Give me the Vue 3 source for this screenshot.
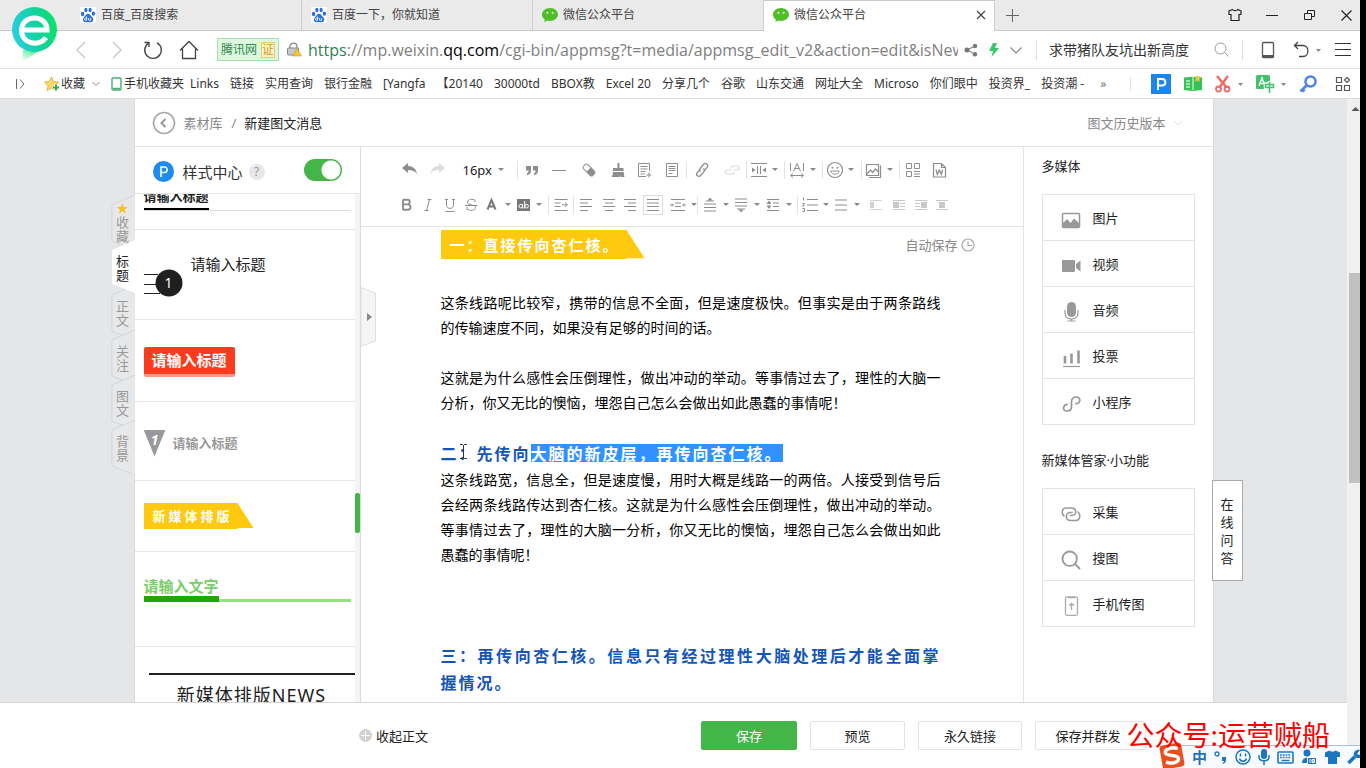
<script setup>
import { ref } from 'vue'

const paw = '<rect width="16" height="16" fill="#fff"/><g fill="#2b6fe0"><ellipse cx="2.6" cy="7" rx="1.7" ry="2.2"/><ellipse cx="5.9" cy="3" rx="1.6" ry="2.3"/><ellipse cx="10.1" cy="3" rx="1.6" ry="2.3"/><ellipse cx="13.4" cy="6.6" rx="1.7" ry="2.2"/><path d="M8 6.8c-2 0-2.500 2-4 3.400-1.600 1.500-1.600 5 1.600 5 1 0 1.600-.3 2.400-.3s1.600.3 2.600.3c3.200 0 3.200-3.600 1.600-5C10.600 8.800 10 6.800 8 6.800z"/></g><path d="M6.600 9.500v3.800H5.500c-1.300 0-1.300-2.300 0-2.300h1M8.500 11v1.600c0 .5.300.7.8.7h1.400V11" fill="none" stroke="#fff" stroke-width=".9"/>'
const wechat = '<path d="M8 1C3.600 1 0 3.900 0 7.500c0 2 1.100 3.700 2.800 4.900L2.300 15l2.900-1.500c.9.3 1.800.4 2.800.4 4.400 0 8-2.800 8-6.400S12.400 1 8 1z" fill="#4fbf26"/><circle cx="5.400" cy="5.800" r="1" fill="#fff"/><circle cx="10.600" cy="5.800" r="1" fill="#fff"/>'

const icons = {
  undo: '<path d="M1 7l6-5v3c5 0 8 3 9 8-2-3-5-4-9-4v3z" fill="#8d8d8d"/>',
  redo: '<path d="M17 7l-6-5v3C6 5 3 8 2 13c2-3 5-4 9-4v3z" fill="#dcdcdc"/>',
  quote: '<path d="M3 5h5v4.500c0 3-1.500 4-4 4.500v-2c1-.4 1.700-1 1.700-2.500H3zM10 5h5v4.500c0 3-1.500 4-4 4.500v-2c1-.4 1.700-1 1.700-2.500H10z" fill="#8d8d8d"/>',
  hr: '<path d="M2 9.500h14" stroke="#8d8d8d"/>',
  eraser: '<g transform="rotate(45 9 9)"><rect x="2.500" y="6" width="13" height="6" rx="2" fill="none" stroke="#8d8d8d"/><path d="M8.500 6h5a2 2 0 0 1 2 2v2a2 2 0 0 1-2 2h-5z" fill="#8d8d8d"/></g>',
  brush: '<path d="M8.500 2h2v5h4v3H4V7h4.500zM4 11h10.500l1 5H12v-2l-1 2H2.500c1-1.500 1.500-3 1.500-5z" fill="#8d8d8d"/>',
  template: '<path d="M14.500 10V2.500h-11v13H11M5.500 5.500h7M5.500 8h7M5.500 10.500h5M5.500 13h4M14 11.500v5M11.500 14h5" fill="none" stroke="#8d8d8d"/>',
  doc: '<path d="M3.500 2.500h11v13h-11zM5.500 5.500h7M5.500 7.500h7M5.500 9.500h7M5.500 12.500h4" fill="none" stroke="#8d8d8d"/>',
  link: '<path d="M7.500 10.500c-1.500-1-1-2.500 0-3.500l3-3.500c2-2.500 5.500.2 3.700 2.600L11 10M10.300 7.500c1.500 1 1.300 2.500.3 3.600l-3 3.400c-2 2.200-5.200-.4-3.600-2.600l2.500-3" fill="none" stroke="#8d8d8d" stroke-width="1.300"/>',
  unlink: '<path d="M8 9H4.500c-3 0-3 4 0 4H9c1.500 0 2.300-1 2.300-2M8 7.500C8 6 9 5 10 5h4c3 0 3 4 0 4h-3.500" fill="none" stroke="#dcdcdc" stroke-width="1.200"/>',
  spacing: '<path d="M1 2.500h16M1 15.500h16M7.500 5v8M10.500 5v8" fill="none" stroke="#8d8d8d"/><path d="M2 6.500L5.500 9 2 11.500zM16 6.500L12.500 9 16 11.500z" fill="#8d8d8d"/>',
  letter: '<path d="M2.500 2v8M15.500 2v8M5.500 10.500L9 2.500l3.500 8M6.800 7.500h4.400M3 14.500h12M5 12.500l-2.500 2L5 16.500M13 12.500l2.500 2-2.500 2" fill="none" stroke="#8d8d8d"/>',
  smile: '<circle cx="9" cy="9" r="7.500" fill="none" stroke="#8d8d8d" stroke-width="1.200"/><circle cx="6.500" cy="6.800" r="1" fill="#8d8d8d"/><circle cx="11.500" cy="6.800" r="1" fill="#8d8d8d"/><path d="M4.800 10h8.400c-.8 4.300-7.600 4.300-8.400 0z" fill="none" stroke="#8d8d8d"/>',
  picture: '<path d="M1.500 3.500h12v11h-12zM15.500 4.500v12H4M2 13l3.500-4 2 2.500 3-3.500 3 3" fill="none" stroke="#8d8d8d" stroke-width="1.200"/>',
  blocks: '<path d="M2.500 2.500h5v5h-5zM10.500 2.500h5v5h-5zM2.500 10.500h5v5h-5zM10 10.500h6M10 13h6M10 15.500h6" fill="none" stroke="#8d8d8d"/>',
  word: '<path d="M3.500 2.500h8l4 4v9.500h-12zM11.500 2.500v4h4M6 8.500l1.300 5 2-4.500 2 4.500 1.300-5" fill="none" stroke="#8d8d8d" stroke-width="1.200"/>',
  bold: '<path d="M5 3.500V14M5 3.800h4.300c3.200 0 3.200 4.600 0 4.600H5h4.800c3.600 0 3.600 5.400 0 5.400H5" fill="none" stroke="#8d8d8d" stroke-width="1.900"/>',
  italic: '<path d="M8.500 3.500h4M5.500 14.500h4M10.500 3.500l-3 11" fill="none" stroke="#8d8d8d"/>',
  underline: '<path d="M4 3.500h3M11 3.500h3M5.500 3.500V9c0 4.500 7 4.500 7 0V3.500M4.500 15.500h9" fill="none" stroke="#8d8d8d"/>',
  strike: '<path d="M13 6V4.200C11 3 5.500 3 5.500 6c0 4 8 2 8 5.500 0 3.500-6 3.500-8.500 1.700V11M3 9.500h12.500" fill="none" stroke="#8d8d8d"/>',
  color: '<path d="M4.500 13.500L8.500 4l4 9.500M6 10.500h5" fill="none" stroke="#777" stroke-width="2"/>',
  back: '<rect x="3" y="3" width="13" height="12" fill="#777"/><g fill="none" stroke="#fff"><circle cx="6.800" cy="10.200" r="1.800"/><path d="M8.700 8v4.500M10.700 5v7.500"/><circle cx="12.600" cy="10.200" r="1.800"/></g>',
  indent: '<path d="M2.500 3.500h13M2.500 7h6M2.500 10.500h6M2.500 14.500h13M10 8.800h5M13 6.500l2.500 2.300L13 11" fill="none" stroke="#8d8d8d"/>',
  left: '<path d="M3 3.500h12M3 7h8M3 10.500h12M3 14.500h8" stroke="#8d8d8d"/>',
  center: '<path d="M3 3.500h12M5 7h8M3 10.500h12M5 14.500h8" stroke="#8d8d8d"/>',
  right: '<path d="M3 3.500h12M7 7h8M3 10.500h12M7 14.500h8" stroke="#8d8d8d"/>',
  justify: '<path d="M3 3.500h12M3 7h12M3 10.500h12M3 14.500h12" stroke="#8d8d8d"/>',
  inset: '<path d="M2 3.500h14M6 7h6M6 10.500h6M2 14.500h14M1 9h3M14 9h3M3 7.500L4.500 9 3 10.500M15 7.500L13.500 9l1.500 1.500" fill="none" stroke="#8d8d8d"/>',
  before: '<path d="M3 8h12M3 11.500h12M3 15h12M5 5h8" stroke="#8d8d8d"/><path d="M9 1.500l2.500 3h-5z" fill="#8d8d8d"/>',
  after: '<path d="M3 3h12M3 6.500h12M3 10h12M5 13h8" stroke="#8d8d8d"/><path d="M9 16.500l2.500-3h-5z" fill="#8d8d8d"/>',
  lines: '<path d="M3 3.500h12M9 7h6M9 10.500h6M3 14.500h12" stroke="#8d8d8d"/><path d="M5 4.500l2.500 3.500h-5zM5 13l2.500-3.500h-5z" fill="#8d8d8d"/>',
  ordered: '<path d="M6 3.500h11M6 9h11M6 14.500h11M2.500 1.500v3M1.500 7.500h2l-2 2.500h2M1.500 12.500h2v3h-2" fill="none" stroke="#8d8d8d"/>',
  bullets: '<path d="M3 4h12M3 9h12M3 14h12" stroke="#8d8d8d"/>',
  fleft: '<path d="M3 4.500h12M3 13.500h12" stroke="#d2d2d2"/><path d="M3 6h4v6H3z" fill="#d2d2d2"/>',
  fwrap: '<path d="M3 4.500h12M10 7.500h5M10 10.500h5M3 13.500h12" stroke="#c8c8c8"/><path d="M3 6h6v6H3z" fill="#c8c8c8"/>',
  fright: '<path d="M3 4.500h12M3 7.500h5M3 10.500h5M3 13.500h12" stroke="#c8c8c8"/><path d="M9 6h6v6H9z" fill="#c8c8c8"/>',
  fmid: '<path d="M3 4.500h12M3 13.500h12" stroke="#c8c8c8"/><path d="M6 6h6v6H6z" fill="#c8c8c8"/>',
}

const row1 = [
  ['undo', 28, '撤销'], ['redo', 27, '重做'], ['size', 66], ['|'],
  ['quote', 28, '引用'], ['hr', 27, '分隔线'], ['eraser', 33, '清除格式'], ['brush', 24, '格式刷'], ['template', 28, '插入模板'], ['doc', 28, '文档'], ['|'],
  ['link', 31, '超链接'], ['unlink', 28, '取消链接'], ['|'],
  ['spacing', 37, '两端缩进', 1], ['|'], ['letter', 37, '字间距', 1], ['|'], ['smile', 38, '表情', 1], ['|'], ['picture', 37, '图片', 1], ['|'],
  ['blocks', 27, '版块'], ['word', 24, '导入Word'],
]
const row2 = [
  ['bold', 22, '加粗'], ['italic', 21, '斜体'], ['underline', 23, '下划线'], ['strike', 18, '删除线'], ['color', 31, '字体颜色', 1], ['back', 37, '背景色', 1], ['|'],
  ['indent', 24, '首行缩进'], ['|'],
  ['left', 24, '左对齐'], ['center', 22, '居中'], ['right', 20, '右对齐'], ['justify', 20, '两端对齐'], ['inset', 31, '缩进', 1], ['|'],
  ['before', 31, '段前距', 1], ['after', 32, '段后距', 1], ['lines', 36, '行间距', 1], ['|'],
  ['ordered', 31, '有序列表', 1], ['bullets', 36, '无序列表', 1],
  ['fleft', 23, '左浮动'], ['fwrap', 22, '左环绕'], ['fright', 22, '右环绕'], ['fmid', 20, '居中环绕'],
]
const rows = [row1, row2]

const tabs = [
  { t: '百度_百度搜索', i: paw }, { t: '百度一下，你就知道', i: paw },
  { t: '微信公众平台', i: wechat }, { t: '微信公众平台', i: wechat, on: true },
]
const marks = ['Links', '链接', '实用查询', '银行金融', '[Yangfa', '【20140', '30000td', 'BBOX教', 'Excel 20', '分享几个', '谷歌', '山东交通', '网址大全', 'Microso', '你们眼中', '投资界_', '投资潮 -']
const sideTabs = ['收藏', '标题', '正文', '关注', '图文', '背景']

const media = [
  { t: '图片', i: '<rect x="1.500" y="3.500" width="17" height="14" rx="1" fill="none" stroke="#999" stroke-width="1.500"/><path d="M2 17v-4l4-4 3.500 4L13 8.500l5 4.500v4z" fill="#999"/>' },
  { t: '视频', i: '<rect x="1" y="4" width="13" height="12" rx="1" fill="#999"/><path d="M19.500 4.500v11L15 12V8z" fill="#999"/>' },
  { t: '音频', i: '<rect x="6" y="0" width="9" height="15" rx="4.500" fill="#999"/><path d="M4 8v3c0 8 13 8 13 0V8M10.500 17v2M6.500 19h8" fill="none" stroke="#999" stroke-width="1.200"/>' },
  { t: '投票', i: '<path d="M4 8v7.500M10.500 5.500v10M17.500 2.500v13" stroke="#999" stroke-width="2.600"/><path d="M2 18.500h17" stroke="#999" stroke-width="1.200"/>' },
  { t: '小程序', i: '<path d="M6 10.300c-4 .7-5 6.700-.5 6.700 3 0 5-1.500 5-4V8c0-3 2-5 5-5 4.500 0 4.500 6.200-.5 6.700" fill="none" stroke="#999" stroke-width="1.700" stroke-linecap="round"/>' },
]
const tools = [
  { t: '采集', i: '<path d="M3 12C0 9.500 1 4 5 4h5.500c5.500 0 5.500 7.500.5 7.500H9.500M17 8c3 2.500 2 8.500-2 8.500H9.500c-5.500 0-5.500-8 0-8h1.500" fill="none" stroke="#999" stroke-width="1.600" stroke-linecap="round"/>' },
  { t: '搜图', i: '<circle cx="8.700" cy="8.700" r="7.200" fill="none" stroke="#999" stroke-width="1.800"/><path d="M14 14l5 5" stroke="#999" stroke-width="1.800"/>' },
  { t: '手机传图', i: '<rect x="4.500" y=".8" width="12" height="18.500" rx="1.500" fill="none" stroke="#aaa" stroke-width="1.300"/><path d="M7 1.500h7M10.500 14V7.500M8 9.800l2.500-2.500L13 9.800" fill="none" stroke="#aaa" stroke-width="1.300"/>' },
]
const groups = [{ h: '多媒体', items: media }, { h: '新媒体管家·小功能', items: tools }]

const enabled = ref(true)
const query = ref('求带猪队友坑出新高度')
const size = ref('16px')
</script>

<template>
  <div class="screen">
    <header class="tabbar">
      <svg class="logo" viewBox="0 0 50 58" width="50" height="58" aria-label="browser">
        <defs>
          <linearGradient id="lg" x1="0" y1=".6" x2="1" y2=".4"><stop offset="0" stop-color="#27cfe0" /><stop offset=".6" stop-color="#12d39a" /><stop offset="1" stop-color="#0be36b" /></linearGradient>
          <linearGradient id="tail" x1=".8" y1="0" x2=".1" y2="1"><stop offset="0" stop-color="#0be36b" /><stop offset=".3" stop-color="#0be36b" /><stop offset="1" stop-color="#0be36b" stop-opacity="0" /></linearGradient>
        </defs>
        <path d="M44 36L12 57c0-5 1-9 1-12z" fill="url(#tail)" />
        <circle cx="24.500" cy="24.500" r="22.500" fill="url(#lg)" />
        <path d="M12 25H37c0-16-25-16-25.500 0 0 14.500 18 17 24.500 7.500" fill="none" stroke="#fff" stroke-width="5" />
      </svg>
      <div v-for="(t, k) in tabs" :key="k" class="tab" :class="{ on: t.on }">
        <svg viewBox="0 0 16 16" width="16" height="16" v-html="t.i"></svg>
        <span>{{ t.t }}</span>
        <button v-if="t.on" class="close" aria-label="关闭标签"><svg width="10" height="10"><path d="M1 1l8 8M9 1L1 9" stroke="#444" stroke-width="1.200" /></svg></button>
      </div>
      <button class="newtab" aria-label="新标签"><svg width="14" height="14"><path d="M7.500 1v13M1 7.500h13" stroke="#666" /></svg></button>
      <div class="win">
        <button aria-label="皮肤"><svg width="14" height="14"><path d="M4.500 1.500L1 3v3.500h2v6h8v-6h2V3L9.500 1.500C8.500 3 5.500 3 4.500 1.500z" fill="none" stroke="#222" stroke-width="1.200" /></svg></button>
        <button aria-label="最小化"><svg width="14" height="14"><path d="M1 7.500h12" stroke="#222" /></svg></button>
        <button aria-label="还原"><svg width="14" height="14"><path d="M2.500 5.500h7v6h-7zM5.500 5V2.500h7v6H10" fill="none" stroke="#222" /></svg></button>
        <button aria-label="关闭"><svg width="14" height="14"><path d="M2.500 2.500l10 10M12.500 2.500l-10 10" stroke="#222" stroke-width="1.200" /></svg></button>
      </div>
    </header>

    <div class="urlbar">
      <nav class="nav">
        <button aria-label="后退"><svg width="20" height="20"><path d="M14 2L6 10l8 8" fill="none" stroke="#c4c4c4" stroke-width="1.200" /></svg></button>
        <button aria-label="前进"><svg width="20" height="20"><path d="M6 2l8 8-8 8" fill="none" stroke="#c4c4c4" stroke-width="1.200" /></svg></button>
        <button aria-label="刷新"><svg width="20" height="20"><path d="M5 3.500A8.300 8.300 0 1 0 14 2.800M1.500 2.500H6V7" fill="none" stroke="#444" stroke-width="1.400" /></svg></button>
        <button aria-label="主页"><svg width="20" height="20"><path d="M1 10.500L10 1.500l9 9M3.500 8.500v10h13v-10" fill="none" stroke="#444" stroke-width="1.300" /></svg></button>
      </nav>
      <span class="cert">腾讯网<b>证</b></span>
      <svg class="lock" width="15" height="15"><path d="M3 6V4.500c0-4.500 7-4.500 7 0V6" fill="none" stroke="#888" stroke-width="1.300" /><rect x=".5" y="6" width="11" height="7" rx="1" fill="#c9c9c9" stroke="#888" /><path d="M10 6.500l4.500 7.500h-9z" fill="#f4c531" stroke="#c79a22" stroke-width=".6" /></svg>
      <div class="url"><span class="sec">https</span>://mp.weixin.<span class="host">qq.com</span>/cgi-bin/appmsg?t=media/appmsg_edit_v2&amp;action=edit&amp;isNew=1</div>
      <div class="urlacts">
        <svg width="14" height="14"><path d="M11 3L3 7l8 4" fill="none" stroke="#888" stroke-width="1.200" /><circle cx="3" cy="7" r="2.500" fill="#777" /><circle cx="11" cy="3" r="2.200" fill="#777" /><circle cx="11" cy="11.200" r="2.200" fill="#777" /></svg>
        <svg width="10" height="14"><path d="M4 0h4L6 5h4L2.500 14 4 8H0z" fill="#3cc46e" /></svg>
        <svg width="12" height="14"><path d="M.5 4.500L6 10l5.500-5.500" fill="none" stroke="#888" stroke-width="1.200" /></svg>
      </div>
      <label class="search"><input v-model="query" aria-label="搜索" /><svg width="15" height="15"><circle cx="6.500" cy="6.500" r="5.500" fill="none" stroke="#999" /><path d="M10.500 10.500l4 4" stroke="#999" /></svg></label>
      <div class="uright">
        <button aria-label="手机"><svg width="14" height="18"><rect x="1.500" y="1.500" width="11" height="15" rx="1" fill="none" stroke="#555" stroke-width="1.300" /><path d="M2 15h10" stroke="#555" stroke-width="2" /></svg></button>
        <button aria-label="恢复"><svg width="28" height="18"><path d="M5 1L1.500 4.500 5 8M1.500 4.500H10c6.500 0 6.500 11 0 11H6" fill="none" stroke="#444" stroke-width="1.300" /><path d="M23 8h5l-2.500 3z" fill="#888" /></svg></button>
        <button aria-label="菜单"><svg width="16" height="18"><path d="M0 2.500h16M0 8.500h16M0 14.500h16" stroke="#333" /></svg></button>
      </div>
    </div>

    <div class="marks">
      <svg class="side" width="10" height="12"><path d="M1.500 1v10M5 1.500L9 6l-4 4.500" fill="none" stroke="#666" /></svg>
      <a href="#" class="fav"><svg width="16" height="16"><path d="M7.500 1l2 4.600 5 .5-3.700 3.400 1 5-4.300-2.600-4.400 2.600 1.100-5L.5 6.100l5-.5z" fill="#ffd76b" stroke="#e0a52b" stroke-width=".8" /><path d="M12 8.500v6M9 11.500h6" stroke="#fff" stroke-width="3.500" /><path d="M12 8.500v6M9 11.500h6" stroke="#2fae50" stroke-width="2" /></svg>收藏<svg class="chev" width="8" height="8"><path d="M.5 2L4 5.500 7.500 2" fill="none" stroke="#888" /></svg></a>
      <a href="#" class="phone"><svg width="11" height="14"><rect x="1" y="1" width="9" height="12" rx="1" fill="#fff" stroke="#44b077" stroke-width="1.400" /><path d="M2 11.500h7" stroke="#44b077" stroke-width="1.500" /></svg>手机收藏夹</a>
      <a v-for="m in marks" :key="m" href="#">{{ m }}</a>
      <span class="more">»</span>
      <div class="exts">
        <svg width="20" height="20"><rect width="20" height="20" fill="#1b87ec" /><path d="M7 16V5h4c4.500 0 4.500 6.500 0 6.500H7" fill="none" stroke="#fff" stroke-width="2" /></svg>
        <svg width="20" height="18"><path d="M1 2.500l8.500-.8 9.500.8V15l-9.500 1L1 15z" fill="#35c257" /><path d="M10 2v13M3 6h4M3 9h4M3 12h4" stroke="#c5f3cf" stroke-width="1.300" /><path d="M12.500 1h4v6l-2-1.500-2 1.500z" fill="#f0c642" /></svg>
        <svg width="29" height="18"><path d="M2 1l10 12M13 1L4 13" stroke="#ee6c66" stroke-width="2.500" /><circle cx="3.500" cy="14" r="2.500" fill="none" stroke="#ee6c66" stroke-width="1.800" /><circle cx="12" cy="14" r="2.500" fill="none" stroke="#ee6c66" stroke-width="1.800" /><path d="M23 8h5l-2.500 3z" fill="#888" /></svg>
        <svg width="31" height="18"><rect width="14" height="14" rx="1.500" fill="#43c16c" /><path d="M3 11l3-8 3 8M4 8.500h4" fill="none" stroke="#fff" stroke-width="1.400" /><path d="M13.500 6v12M9.500 9h8v4h-8z" fill="none" stroke="#fff" stroke-width="3.500" /><path d="M13.500 7v11M9.500 9.500h8v3h-8z" fill="none" stroke="#43c16c" stroke-width="1.600" /><path d="M25 8h5l-2.500 3z" fill="#888" /></svg>
        <svg width="18" height="18"><circle cx="11.500" cy="6.500" r="5" fill="none" stroke="#4a86e8" stroke-width="2.500" /><path d="M8 10l-6.500 6.500M3 14l2.500 2.500" stroke="#4a86e8" stroke-width="2.800" /></svg>
        <svg width="16" height="16"><path d="M1.500 1.500h5v5h-5zM1.500 9.500h5v5h-5zM9.500 9.500h5v5h-5zM12 1.500L14.500 4 12 6.500 9.500 4z" fill="none" stroke="#555" stroke-width="1.200" /></svg>
      </div>
    </div>

    <div class="body">
      <div class="col">
        <main class="page">
          <nav class="sidetabs">
            <button v-for="(s, k) in sideTabs" :key="s" :class="{ on: k === 1, first: k === 0 }">
              <svg viewBox="0 0 24 54" width="24" height="54"><path :d="k === 1 ? 'M24 0L1 10v34l23 9z' : 'M24 0L1 10v36l23 9'" /></svg>
              <i v-if="k === 0">★</i><span>{{ s }}</span>
            </button>
          </nav>
          <header class="head">
            <button class="backbtn" aria-label="返回"><svg width="24" height="24"><circle cx="12" cy="12" r="10.500" fill="none" stroke="#aaa" stroke-width="1.600" /><path d="M13.500 8L9.500 12l4 4" fill="none" stroke="#999" stroke-width="2" /></svg></button>
            <a href="#">素材库</a><em>/</em><span>新建图文消息</span>
            <a href="#" class="hist">图文历史版本<svg width="10" height="6"><path d="M1 1l4 4 4-4" fill="none" stroke="#ddd" /></svg></a>
          </header>
          <div class="cols">
            <section class="styles">
              <div class="shead">
                <svg width="21" height="21"><circle cx="10.500" cy="10.500" r="10.500" fill="#1d8bf0" /><path d="M8 16V6h3.300c3.700 0 3.700 5.500 0 5.500H8" fill="none" stroke="#fff" stroke-width="1.600" /></svg>
                <span>样式中心</span><i>?</i>
                <input v-model="enabled" type="checkbox" class="switch" aria-label="样式中心开关" />
              </div>
              <div class="sbody">
                <div class="slist">
                  <div class="s s1"><div><b>请输入标题</b></div></div>
                  <div class="s s2"><svg width="40" height="28"><path d="M0 5.500h14M0 15.500h14M0 24.500h16" stroke="#222" /><circle cx="25" cy="14" r="13.500" fill="#1f1f1f" /></svg><strong>1</strong><span>请输入标题</span></div>
                  <div class="s s3"><b>请输入标题</b></div>
                  <div class="s s4"><div class="tri">1</div><b>请输入标题</b></div>
                  <div class="s s5"><b class="ribbon">新媒体排版</b></div>
                  <div class="s s6"><div><b>请输入文字</b></div></div>
                  <div class="s s7"><div>新媒体排版NEWS</div></div>
                </div>
                <div class="strack"><div class="sthumb"></div></div>
              </div>
            </section>

            <section class="editor">
              <button class="fold" aria-label="收起面板"><svg width="16" height="60"><path d="M0 .5L14.500 6v48L0 59.500z" fill="#f5f5f5" stroke="#e0e0e0" /><path d="M6 26l5 4-5 4z" fill="#888" /></svg></button>
              <div class="toolbar">
                <div v-for="(r, ri) in rows" :key="ri" class="trow">
                  <template v-for="(b, bi) in r" :key="bi">
                    <span v-if="b[0] === '|'" class="sep"></span>
                    <label v-else-if="b[0] === 'size'" class="size"><select v-model="size" aria-label="字号"><option>16px</option></select><u class="caret"></u></label>
                    <button v-else :aria-label="b[2]" :class="{ drop: b[3], boxed: b[0] === 'justify' }" :style="{ width: b[1] + 'px' }">
                      <svg viewBox="0 0 18 18" width="18" height="18" v-html="icons[b[0]]"></svg><u v-if="b[3]" class="caret"></u>
                    </button>
                  </template>
                </div>
              </div>
              <div class="doc">
                <div class="autosave">自动保存<svg width="14" height="14"><circle cx="7" cy="7" r="6" fill="none" stroke="#aaa" stroke-width="1.200" /><path d="M7 3.500V7.500h4" fill="none" stroke="#aaa" stroke-width="1.200" /></svg></div>
                <h2 class="ribbon big">一：直接传向杏仁核。</h2>
                <p>这条线路呢比较窄，携带的信息不全面，但是速度极快。但事实是由于两条路线的传输速度不同，如果没有足够的时间的话。</p>
                <p class="blank"></p>
                <p>这就是为什么感性会压倒理性，做出冲动的举动。等事情过去了，理性的大脑一分析，你又无比的懊恼，埋怨自己怎么会做出如此愚蠢的事情呢！</p>
                <p class="blank"></p>
                <h3>二：先传向<mark>大脑的新皮层，再传向杏仁核。</mark><svg class="ibeam" width="9" height="17"><path d="M1 1.500h2.500l1 1 1-1H8M4.500 2v13M1 15.500h2.500l1-1 1 1H8" fill="none" stroke="#333" /></svg></h3>
                <p>这条线路宽，信息全，但是速度慢，用时大概是线路一的两倍。人接受到信号后会经两条线路传达到杏仁核。这就是为什么感性会压倒理性，做出冲动的举动。等事情过去了，理性的大脑一分析，你又无比的懊恼，埋怨自己怎么会做出如此愚蠢的事情呢！</p>
                <p class="blank"></p><p class="blank"></p><p class="blank"></p>
                <h3>三：再传向杏仁核。信息只有经过理性大脑处理后才能全面掌握情况。</h3>
                <p>做出一个成熟的判断，在这中间是在于，可以慢慢推敲整件事情的全部经过，然后再做决定。</p>
              </div>
            </section>

            <aside class="media">
              <template v-for="g in groups" :key="g.h">
                <h4>{{ g.h }}</h4>
                <ul><li v-for="m in g.items" :key="m.t"><button><svg viewBox="0 0 20 20" width="20" height="20" v-html="m.i"></svg>{{ m.t }}</button></li></ul>
              </template>
            </aside>
          </div>
          <button class="qa">在线问答</button>
        </main>
        <footer class="foot">
          <button class="collapse"><svg width="13" height="13"><circle cx="6.500" cy="6.500" r="6.500" fill="#d2d2d2" /><path d="M6.500 2v9M2 6.500h9" stroke="#fff" /></svg>收起正文</button>
          <div class="acts"><button class="save">保存</button><button>预览</button><button class="wide">永久链接</button><button class="wider">保存并群发</button></div>
        </footer>
      </div>
      <div class="scroll"><svg width="9" height="6"><path d="M4.500 1L8.500 5h-8z" fill="#555" /></svg><div></div></div>
    </div>

    <div class="stamp">公众号:运营贼船</div>
    <div class="ime">
      <svg class="sogou" width="28" height="28"><g transform="rotate(-10 14 14)"><rect x="3" y="2" width="22" height="24" rx="3" fill="#e8501c" /><path d="M21 7.500C15 4.500 7.500 6 8 10c.5 4 12 3 12 7.500 0 4-8 4.500-13 1.500" fill="none" stroke="#fff" stroke-width="3.400" /></g></svg>
      <b>中</b>
      <svg width="14" height="16"><circle cx="3" cy="5" r="2" fill="none" stroke="#1b76c0" stroke-width="1.300" /><path d="M8 8h4v3c0 2-1 3-3 4l-.5-1c1-.5 1.500-1.500 1.500-2H8z" fill="#1b76c0" /></svg>
      <svg width="16" height="16"><circle cx="8" cy="8" r="7" fill="none" stroke="#1b76c0" stroke-width="1.500" /><path d="M5.500 4.500v3M10.500 4.500v3M4.500 9.500c1 3.500 6 3.500 7 0" fill="none" stroke="#1b76c0" stroke-width="1.500" /></svg>
      <svg width="12" height="16"><rect x="3" y="0" width="6" height="10" rx="3" fill="#1b76c0" /><path d="M1 6v2c0 5 10 5 10 0V6M6 12v4" fill="none" stroke="#1b76c0" stroke-width="1.500" /></svg>
      <svg width="17" height="16"><rect x="1" y="3" width="15" height="11" rx="1" fill="none" stroke="#1b76c0" stroke-width="1.600" /><path d="M3 6h11M3 8.500h11" stroke="#1b76c0" stroke-width="1.500" stroke-dasharray="1.800 1" /><path d="M4.500 11.500h8" stroke="#1b76c0" stroke-width="1.500" /></svg>
      <svg width="17" height="16"><circle cx="6" cy="4" r="3.500" fill="#1b76c0" /><path d="M1 14c0-7 10-7 10 0z" fill="#1b76c0" /><path d="M6.500 8.500h9v7h-9z" fill="#1b76c0" stroke="#fff" /><path d="M9 10v4M11 10.500h2.500v3H11zM11 12h2.500" fill="none" stroke="#fff" /></svg>
      <svg width="15" height="16"><path d="M4.500 1.500c1 1.500 5 1.500 6 0L15 3.500V8h-3v7H3V8H0V3.500z" fill="#1b76c0" /></svg>
      <svg width="13" height="16"><path d="M1.500 14L8 7.500" stroke="#1b76c0" stroke-width="3.500" /><path d="M13 1C9 0 6 3 7 6.500L10 9h3V6l-3-1z" fill="#1b76c0" /></svg>
    </div>
  </div>
</template>

<style>
html, body { margin: 0; overflow: hidden; }
</style>

<style scoped>
* { box-sizing: border-box; }
.screen { position: relative; display: flex; flex-direction: column; height: 100vh; overflow: hidden; border-right: 6px solid #000; background: #fff; font: 13px/20px "Noto Sans", "Noto Sans CJK SC", sans-serif; color: #222; text-spacing-trim: space-all; }
button { border: 0; padding: 0; margin: 0; background: none; font: inherit; color: inherit; }
a { color: inherit; text-decoration: none; }
svg { display: block; flex: none; }
h2, h3, h4, p, ul { margin: 0; padding: 0; }
i, em, u { font-style: normal; text-decoration: none; }

.tabbar { position: relative; display: flex; flex: none; height: 31px; padding-left: 71px; background: #eaeaea; border-bottom: 1px solid #c8c8c8; font-size: 12px; }
.logo { position: absolute; left: 10px; top: 5px; z-index: 5; }
.tab { display: flex; align-items: center; gap: 5px; width: 231px; height: 31px; padding: 0 8px 2px 9px; border-right: 1px solid #cfcfcf; color: #444; }
.tab.on { background: #fff; border-top: 1px solid #c8c8c8; }
.close { margin-left: auto; }
.newtab { padding: 0 10px; }
.win { display: flex; align-items: center; gap: 23px; margin-left: auto; padding-right: 7px; }

.urlbar { display: flex; align-items: center; flex: none; height: 38px; border-bottom: 1px solid #e2e2e2; }
.nav { display: flex; gap: 16px; padding-left: 71px; }
.cert { display: flex; align-items: center; gap: 4px; height: 23px; margin-left: 18px; padding: 0 3px; border: 1px solid #a6dfae; background: #def7df; color: #2c8a4c; font-size: 12px; white-space: nowrap; }
.cert b { border: 1px solid #e9c878; background: #fdf3c8; color: #d09b2a; font-weight: 400; line-height: 14px; }
.lock { margin: 0 6px 0 8px; }
.url { flex: 1; overflow: hidden; white-space: nowrap; font-family: "Open Sans", sans-serif; font-size: 16px; line-height: 24px; color: #808080; }
.sec { color: #2d8250; }
.host { color: #000; }
.urlacts { display: flex; align-items: center; gap: 11px; padding: 0 14px 0 6px; }
.search { display: flex; align-items: center; width: 207px; height: 20px; padding: 0 13px 0 12px; border: solid #ddd; border-width: 0 1px; }
.search input { flex: 1; min-width: 0; border: 0; padding: 0; outline: 0; font: 14px/20px "Noto Sans", "Noto Sans CJK SC", sans-serif; color: #333; }
.uright { display: flex; align-items: center; gap: 18px; padding: 0 9px 0 18px; }
.uright button:last-child { margin-left: -4px; }

.marks { display: flex; align-items: center; flex: none; gap: 11px; height: 30px; padding-left: 15px; border-bottom: 1px solid #dcdcdc; font-size: 12px; white-space: nowrap; color: #333; }
.fav, .phone { display: flex; align-items: center; gap: 1px; }
.fav { margin-left: 8px; }
.chev { margin-left: 6px; }
.phone { margin-right: -5px; }
.phone svg { margin-right: 1px; }
.more { margin-left: 5px; color: #777; }
.exts { display: flex; align-items: center; gap: 12px; height: 14px; margin-left: auto; padding: 0 9px 0 20px; border-left: 1px solid #ddd; }
.exts svg:last-child { margin-left: 6px; }

.body { display: flex; flex: 1; min-height: 0; }
.col { display: flex; flex-direction: column; flex: 1; min-width: 0; background: #e5e6e8; }
.page { position: relative; display: flex; flex-direction: column; flex: 1; min-height: 0; width: 82%; min-width: 1000px; max-width: 1080px; margin: 0 auto; background: #fff; border: solid #dadbdc; border-width: 0 1px; }
.head { display: flex; align-items: center; flex: none; height: 48px; padding: 0 30px 0 17px; border-bottom: 1px solid #e4e4e4; color: #888; }
.backbtn { margin-right: 8px; }
.head em { margin: 0 8px 0 9px; }
.head span { color: #222; }
.hist { display: flex; align-items: center; gap: 7px; margin-left: auto; }
.cols { display: grid; grid-template-columns: 226px minmax(0, 1fr) 190px; flex: 1; min-height: 0; }

.sidetabs { position: absolute; left: -24px; top: 93px; display: flex; flex-direction: column; }
.sidetabs button { position: relative; display: flex; flex-direction: column; align-items: center; justify-content: flex-end; width: 24px; height: 45px; padding-bottom: 6px; color: #999; line-height: 14px; }
.sidetabs button.first { height: 51px; padding-bottom: 0; }
.sidetabs i { position: relative; color: #fdbf16; font-size: 12px; line-height: 12px; }
.sidetabs svg { position: absolute; left: 0; bottom: -6px; fill: #e7e8ea; stroke: #d4d5d7; }
.sidetabs span { position: relative; width: 13px; height: 28px; white-space: normal; word-break: break-all; }
.sidetabs .on { z-index: 1; color: #222; }
.sidetabs .on svg { fill: #fff; stroke: none; }

.styles { display: flex; flex-direction: column; min-height: 0; border-right: 1px solid #dcdcdc; }
.shead { display: flex; align-items: center; flex: none; height: 47px; padding: 3px 18px 0; border-bottom: 1px solid #e6e6e6; font-size: 15px; color: #333; }
.shead span { margin: 0 6px 0 9px; }
.shead i { width: 16px; border-radius: 8px; background: #e8e8e8; color: #999; font-size: 12px; line-height: 16px; text-align: center; }
.switch { appearance: none; width: 38px; height: 22px; margin: -4px 0 0 auto; border-radius: 11px; background: radial-gradient(circle at 27px 11px, #fff 9px, #44b549 10px); }
.switch:not(:checked) { background: radial-gradient(circle at 11px 11px, #fff 9px, #ccc 10px); }
.sbody { display: flex; flex: 1; min-height: 0; }
.slist { flex: 1; min-width: 0; overflow: hidden; }
.strack { width: 5px; background: #f4f4f4; }
.sthumb { height: 40px; margin-top: 299px; border-radius: 2px; background: #44b549; }
.s { display: flex; padding-left: 9px; border-bottom: 1px solid #e6e6e6; }
.s1 { height: 36px; align-items: flex-start; padding-right: 4px; }
.s1 div { flex: 1; height: 17px; border-bottom: 1px solid #ddd; display: flex; align-items: flex-end; }
.s1 b { height: 28px; border-bottom: 2px solid #000; line-height: 28px; }
.s2 { position: relative; height: 90px; padding-top: 24px; font-size: 15px; }
.s2 svg { margin: 15px 7px 0 0; }
.s2 strong { position: absolute; left: 21px; top: 43px; width: 26px; text-align: center; color: #fff; font-weight: 400; font-size: 14px; }
.s3 { height: 82px; align-items: center; padding-top: 2px; }
.s3 b { height: 30px; padding: 0 8px; border-radius: 2px; border-bottom: 3px solid #f2968a; background: #fd3a1e; color: #fff; font-size: 15px; line-height: 27px; }
.s4 { height: 79px; align-items: center; gap: 7px; padding-top: 4px; color: #999; }
.tri { width: 22px; height: 27px; clip-path: polygon(0 0, 100% 0, 50% 100%); background: #999; color: #fff; font: italic bold 14px/20px "Noto Sans", sans-serif; text-align: center; }
.s5 { height: 71px; align-items: center; }
.ribbon { width: 110px; padding: 0 9px; clip-path: polygon(0 0, 94px 0, 100% 96%, 94px 96%, 94px 100%, 0 100%); background: #fec90f; color: #fff; font-size: 13px; line-height: 26px; letter-spacing: 3px; white-space: nowrap; }
.s6 { height: 95px; padding: 25px 4px 0 9px; }
.s6 div { flex: 1; height: 25px; border-bottom: 3px solid #96e281; }
.s6 b { display: inline-block; height: 25px; border-bottom: 6px solid #1fa800; color: #79cf69; font-size: 15px; line-height: 19px; }
.s7 { padding: 26px 0 0 14px; }
.s7 div { flex: 1; border-top: 2px solid #222; font-size: 18px; line-height: 40px; letter-spacing: 1px; text-align: center; }

.editor { position: relative; display: flex; flex-direction: column; min-height: 0; }
.fold { position: absolute; left: 0; top: 140px; }
.toolbar { flex: none; height: 80px; padding: 5px 0 0 35px; border-bottom: 1px solid #e4e4e4; }
.trow { display: flex; align-items: center; height: 35px; }
.trow button { display: flex; align-items: center; justify-content: center; flex: none; height: 20px; }
.trow .drop { justify-content: flex-start; gap: 4px; padding-left: 3px; }
.trow .boxed { margin: 0 3px; border: 1px solid #ddd; }
.caret { width: 0; border: solid transparent; border-width: 3px 3px 0; border-top-color: #888; }
.sep { width: 1px; height: 18px; background: #e4e4e4; }
.size { display: flex; align-items: center; width: 66px; padding-left: 12px; gap: 1px; }
.size select { appearance: none; border: 0; padding: 0; background: none; width: 34px; font: 13px/20px "Noto Sans", sans-serif; color: #222; }
.doc { position: relative; flex: 1; min-height: 0; overflow: hidden; padding: 3px 82px 0 80px; font: 14px/25px "Noto Sans CJK SC", sans-serif; color: #000; text-align: justify; }
.autosave { position: absolute; right: 48px; top: 8px; display: flex; align-items: center; gap: 3px; font: 13px/20px "Noto Sans CJK SC", sans-serif; color: #888; }
.big { width: 204px; margin-bottom: 31px; font-size: 15px; line-height: 29px; letter-spacing: 2px; clip-path: polygon(0 0, 186px 0, 100% 97%, 186px 97%, 186px 100%, 0 100%); }
.blank { height: 25px; }
h3 { position: relative; font-size: 16px; line-height: 27px; letter-spacing: 2px; color: #1456b8; }
mark { display: inline-block; line-height: 18px; background: #3390ff; color: #fff; }
.ibeam { position: absolute; left: 18px; top: 3px; }

.media { padding: 9px 18px 0; border-left: 1px solid #e4e4e4; }
h4 { font-weight: 400; font-size: 13px; }
ul { list-style: none; margin: 18px 0 25px; border: 1px solid #e4e4e4; }
li + li { border-top: 1px solid #e4e4e4; }
li button { display: flex; align-items: center; gap: 12px; width: 100%; height: 45px; padding-left: 18px; }
li svg { margin-top: 4px; }
.qa { position: absolute; left: calc(100% - 1px); top: 381px; width: 31px; height: 101px; padding: 0 8px; border: 1px solid #aaa; background: #fff; line-height: 18px; }

.foot { display: flex; align-items: center; flex: none; height: 66px; padding: 0 201px 0 359px; background: #fff; border-top: 1px solid #d6d6d6; white-space: nowrap; }
.collapse { display: flex; align-items: center; gap: 4px; }
.acts { display: flex; gap: 13px; margin-left: auto; }
.acts button { width: 95px; height: 29px; border: 1px solid #e2e2e2; border-radius: 2px; background: #fff; }
.acts .save { width: 96px; border-color: #44b549; background: #44b549; color: #fff; }
.acts .wide { width: 104px; }
.acts .wider { width: 111px; padding-right: 5px; }
.scroll { width: 13px; flex: none; padding: 7px 0 0 2px; background: #f0f0f0; }
.scroll svg { margin-left: 2px; }
.scroll div { height: 210px; margin-top: 161px; background: #c1c1c1; }

.stamp { position: absolute; right: 30px; bottom: 16px; z-index: 3; font-size: 28px; line-height: 34px; color: #f00; white-space: nowrap; }
.ime { position: absolute; right: 0; bottom: 0; z-index: 2; display: flex; align-items: center; gap: 7px; height: 23px; padding-left: 13px; border-top: 1px solid #a9bfd6; background: #f7fbff; }
.ime b { width: 15px; color: #1b76c0; font-size: 15px; line-height: 16px; }
.sogou { position: absolute; left: -21px; bottom: -2px; }
</style>
